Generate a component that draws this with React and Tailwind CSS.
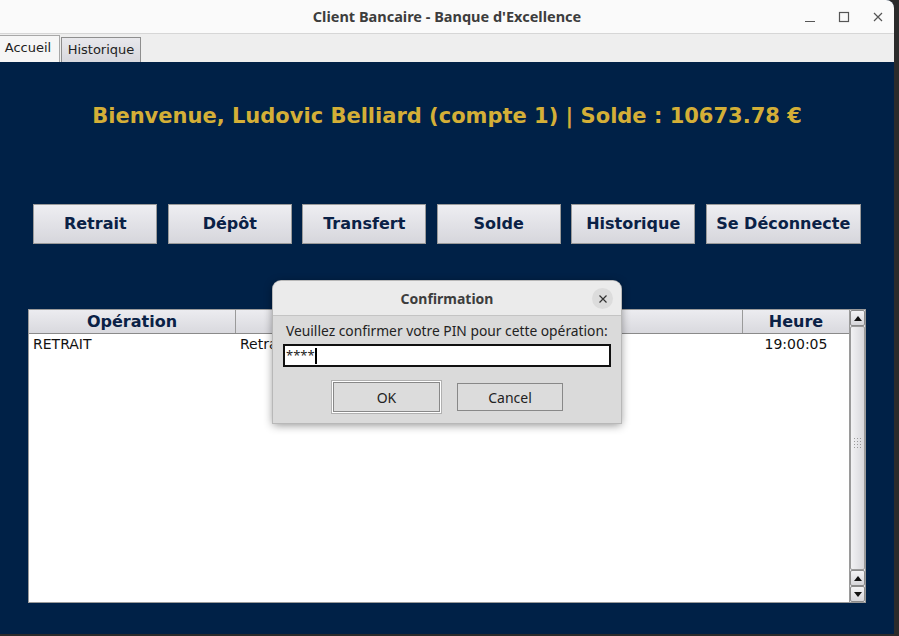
import React from 'react';

const buttons = ['Retrait', 'Dépôt', 'Transfert', 'Solde', 'Historique', 'Se Déconnecte'];

const Arrow = ({ up }) => (
  <svg width="8" height="5" viewBox="0 0 8 5" className="block">
    <path d={up ? 'M0 5 L4 0 L8 5 Z' : 'M0 0 L4 5 L8 0 Z'} fill="#111" />
  </svg>
);

const ScrollBtn = ({ up }) => (
  <div className="flex h-[16px] items-center justify-center rounded-[2px] border border-[#8a8a8a] bg-gradient-to-b from-[#f4f4f6] to-[#d6d6da]">
    <Arrow up={up} />
  </div>
);

const App = () => {
  return (
    <div className="h-[636px] w-[899px] overflow-hidden bg-[#2b2b2b] font-['DejaVu_Sans',sans-serif]">
      <div className="relative flex h-[634px] w-[894px] flex-col overflow-hidden rounded-tr-[8px] bg-[#002147]">
        {/* title bar */}
        <div className="relative flex h-[34px] items-center justify-center border-b border-[#d6d6d6] bg-[#fafafa]">
          <span className="font-['Noto_Sans',sans-serif] text-[14.5px] font-bold text-[#3d3d3d]">Client Bancaire - Banque d'Excellence</span>
          <div className="absolute right-[10px] top-0 flex h-[33px] items-center gap-[22px] text-[#555]">
            <svg width="12" height="12" viewBox="0 0 12 12"><path d="M1 10.5 H11" stroke="#555" strokeWidth="1.2" /></svg>
            <svg width="12" height="12" viewBox="0 0 12 12"><rect x="1.5" y="1.5" width="9" height="9" fill="none" stroke="#555" strokeWidth="1.2" /></svg>
            <svg width="12" height="12" viewBox="0 0 12 12"><path d="M2 2 L10 10 M10 2 L2 10" stroke="#555" strokeWidth="1.2" /></svg>
          </div>
        </div>

        {/* tabs */}
        <div className="flex h-[28px] items-end bg-[#eeeeee] text-[13px] text-[#222]">
          <div className="flex h-[27px] w-[60px] items-center justify-center border-r border-t border-[#a8a8a8] bg-[#f6f6f6] pb-[2px] pr-[3px]">Accueil</div>
          <div className="ml-[1px] flex h-[25px] w-[80px] items-center justify-center border border-b-0 border-[#8e8e8e] bg-gradient-to-b from-[#e8e8ec] to-[#d8d8de]">Historique</div>
        </div>

        {/* content */}
        <div className="flex flex-1 flex-col">
          <div className="mt-[41px] h-[26px] text-center text-[21px] font-bold leading-[26px] text-[#d4af37]">
            Bienvenue, Ludovic Belliard (compte 1) | Solde : 10673.78 €
          </div>

          <div className="mt-[75px] flex justify-center gap-[10.5px]">
            {buttons.map((b) => (
              <div
                key={b}
                className={`flex h-[40px] items-center justify-center border border-[#9a9a9a] bg-gradient-to-b from-[#eeeef2] to-[#d6d6dc] text-[16px] font-bold text-[#0a2146] ${b === 'Se Déconnecte' ? 'w-[155px]' : 'w-[124px]'}`}
              >
                {b}
              </div>
            ))}
          </div>

          <div className="ml-[28px] mt-[65px] flex h-[294px] w-[838px] border border-[#9a9a9a] bg-white">
            <div className="flex flex-1 flex-col">
              <div className="flex h-[24px] border-b border-[#8a8a8a] bg-gradient-to-b from-[#ececf0] to-[#d9d9de] text-[16px] font-bold text-[#0a2146]">
                <div className="flex w-[207px] items-center justify-center border-r border-[#9a9a9a]">Opération</div>
                <div className="flex w-[507px] items-center justify-center border-r border-[#9a9a9a]">Détails</div>
                <div className="flex flex-1 items-center justify-center">Heure</div>
              </div>
              <div className="flex h-[20px] items-center text-[14px] text-[#111]">
                <div className="w-[207px] pl-[4px]">RETRAIT</div>
                <div className="w-[507px] pl-[4px]">Retrait de 150.00 €</div>
                <div className="flex-1 text-center">19:00:05</div>
              </div>
            </div>
            <div className="flex w-[16px] flex-col border-l border-[#9a9a9a] bg-[#e4e4e8]">
              <ScrollBtn up />
              <div className="flex flex-1 flex-col items-center justify-center rounded-[2px] border border-[#9a9a9a] bg-gradient-to-r from-[#f2f2f4] to-[#d8d8dc]">
                <div className="grid grid-cols-3 gap-[2px] pb-[10px]">
                  {Array.from({ length: 12 }).map((_, i) => (
                    <div key={i} className="h-[1px] w-[1px] bg-[#9a9a9a]" />
                  ))}
                </div>
              </div>
              <ScrollBtn up />
              <ScrollBtn />
            </div>
          </div>
        </div>

        {/* dialog */}
        <div className="absolute left-[273px] top-[281px] w-[348px] overflow-hidden rounded-t-[8px] bg-[#dadada] font-['Noto_Sans',sans-serif] shadow-[0_2px_10px_rgba(0,0,0,0.45)] ring-1 ring-[#b8b8b8]">
          <div className="relative flex h-[35px] items-center justify-center border-b border-[#c4c4c4] bg-[#ebebeb]">
            <span className="text-[14px] font-bold text-[#3d3d3d]">Confirmation</span>
            <div className="absolute right-[8px] top-[7px] flex h-[21px] w-[21px] items-center justify-center rounded-full bg-[#dcdcdc]">
              <svg width="8" height="8" viewBox="0 0 8 8"><path d="M0.5 0.5 L7.5 7.5 M7.5 0.5 L0.5 7.5" stroke="#333" strokeWidth="1.2" /></svg>
            </div>
          </div>
          <div className="px-[10px] pb-[9px] pt-[6px] text-[14px] text-[#222]">
            <div className="whitespace-nowrap pl-[3px] text-[13.8px] leading-[18px]">Veuillez confirmer votre PIN pour cette opération:</div>
            <div className="mt-[4px] flex h-[23px] items-center border-2 border-[#111] bg-white pl-[1px] text-[13px]">
              <span className="leading-none text-[#222]">****</span>
              <span className="h-[16px] w-[2px] bg-black" />
            </div>
            <div className="mt-[13px] flex justify-center gap-[15px]">
              <div className="border border-[#b0b0b0] p-[1px]">
                <div className="flex h-[30px] w-[107px] items-center justify-center border border-[#888] bg-[#dcdcdc] ring-1 ring-white">OK</div>
              </div>
              <div className="mt-[3px] flex h-[28px] w-[106px] items-center justify-center border border-[#888] bg-[#dcdcdc]">Cancel</div>
            </div>
          </div>
        </div>
      </div>
    </div>
  );
};

export default App;
